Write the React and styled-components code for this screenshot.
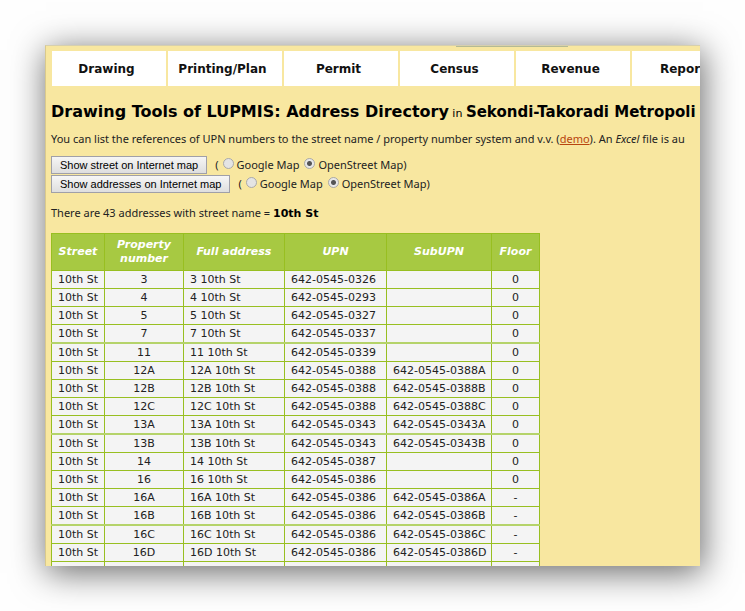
import React, { useState } from "react";
import styled, { createGlobalStyle } from "styled-components";

const GlobalStyle = createGlobalStyle`
  * {
    box-sizing: border-box;
  }

  body {
    margin: 0;
    background: #fefefe;
    color: #222;
    font-family: "DejaVu Sans", Verdana, sans-serif;
    font-size: 11px;
    line-height: 14px;
  }
`;

const Page = styled.div`
  height: 100vh;
  padding: 45px;
`;

const Frame = styled.main`
  display: flex;
  flex-direction: column;
  align-items: flex-start;
  height: 100%;
  padding: 0 5px;
  overflow: hidden;
  white-space: nowrap;
  background: #f8e7a0;
  border-top: 1px solid #d6cfae;
  border-left: 1px solid #d9c98c;
  box-shadow: 2px 6px 32px 1px rgba(0, 0, 0, 0.58);
`;

const Tab = styled.div`
  flex: none;
  width: 112px;
  height: 1px;
  margin-left: 405px;
  background: #b4ba94;
`;

const Nav = styled.nav`
  display: flex;
  flex: none;
  gap: 2px;
  margin-top: 4px;
  padding-left: 1px;
`;

const NavLink = styled.a`
  display: flex;
  flex: none;
  align-items: center;
  justify-content: center;
  width: 114px;
  height: 35px;
  padding-right: 5px;
  background: #fff;
  color: #111;
  font-size: 12px;
  font-weight: bold;
  text-decoration: none;
`;

const Title = styled.h1`
  margin: 16px 0 0;
  font-size: 11px;
  line-height: 20px;
  font-weight: normal;
  color: #000;
`;

const TitleName = styled.b`
  font-size: 16px;
`;

const TitlePlace = styled.b`
  font-size: 15px;
`;

const Text = styled.p`
  margin: ${({ $top }) => $top}px 0 0;
  font-family: "Noto Sans", sans-serif;
  font-size: 11px;
`;

const StreetName = styled.b`
  font-family: "DejaVu Sans", Verdana, sans-serif;
  color: #000;
`;

const DemoLink = styled.a`
  color: #b8450f;
`;

const Forms = styled.div`
  display: flex;
  flex-direction: column;
  gap: 1px;
  margin-top: 10px;
`;

const MapForm = styled.form`
  display: flex;
  align-items: center;
  height: 18px;
  font-family: "Noto Sans", sans-serif;
`;

const MapButton = styled.button`
  height: 18px;
  margin-right: 8px;
  padding: 0 8px;
  border: 1px solid #a0a0a8;
  background: linear-gradient(#f6f6f6, #dedede);
  color: #000;
  font-family: "Liberation Sans", Arial, sans-serif;
  font-size: 11px;
  line-height: 16px;
`;

const RadioLabel = styled.label`
  display: flex;
  align-items: center;
  gap: 3px;
  margin-left: ${({ $left }) => $left}px;
`;

const Radio = styled.input`
  appearance: none;
  width: 11px;
  height: 11px;
  margin: 0 0 4px;
  border: 1px solid #a9a9a9;
  border-radius: 50%;
  background: #e4e4e4;

  &:checked {
    background: radial-gradient(circle, #555 0 2px, #e8e8e8 3px);
  }
`;

const Table = styled.table`
  flex: none;
  width: 488px;
  margin-top: 12px;
  table-layout: fixed;
  border-collapse: collapse;
  background: #f4f4f4;
`;

const Col = styled.col`
  width: ${({ $width }) => $width}px;
`;

const HeadCell = styled.th`
  height: 37px;
  padding: 0;
  border: 1px solid #98bf21;
  background: #a7c942;
  color: #fff;
  font-style: italic;
  white-space: normal;
`;

const Row = styled.tr`
  &:nth-child(5n + 4) td {
    border-bottom: 2px solid #b5d36a;
  }
`;

const Cell = styled.td`
  padding: 2px 6px 1px;
  border: 1px solid #98bf21;
  text-align: ${({ $align }) => $align || "left"};
`;

const menu = ["Drawing", "Printing/Plan", "Permit", "Census", "Revenue", "Reports"];

const columns = [
  { name: "Street", width: 53 },
  { name: "Property number", width: 79 },
  { name: "Full address", width: 101 },
  { name: "UPN", width: 102 },
  { name: "SubUPN", width: 105 },
  { name: "Floor", width: 48 },
];

const addresses = [
  ["3", "0326", "", "0"],
  ["4", "0293", "", "0"],
  ["5", "0327", "", "0"],
  ["7", "0337", "", "0"],
  ["11", "0339", "", "0"],
  ["12A", "0388", "A", "0"],
  ["12B", "0388", "B", "0"],
  ["12C", "0388", "C", "0"],
  ["13A", "0343", "A", "0"],
  ["13B", "0343", "B", "0"],
  ["14", "0387", "", "0"],
  ["16", "0386", "", "0"],
  ["16A", "0386", "A", "-"],
  ["16B", "0386", "B", "-"],
  ["16C", "0386", "C", "-"],
  ["16D", "0386", "D", "-"],
  ["16E", "0386", "E", "-"],
];

const MapChooser = ({ label, name }) => {
  const [map, setMap] = useState("osm");

  return (
    <MapForm onSubmit={(e) => e.preventDefault()}>
      <MapButton type="submit">{label}</MapButton>
      (
      <RadioLabel $left={4}>
        <Radio
          type="radio"
          name={name}
          checked={map === "google"}
          onChange={() => setMap("google")}
        />
        Google Map
      </RadioLabel>
      <RadioLabel $left={5}>
        <Radio
          type="radio"
          name={name}
          checked={map === "osm"}
          onChange={() => setMap("osm")}
        />
        OpenStreet Map)
      </RadioLabel>
    </MapForm>
  );
};

const App = () => {
  return (
    <Page>
      <GlobalStyle />
      <Frame>
        <Tab />
        <Nav>
          {menu.map((item) => (
            <NavLink key={item} href="#">
              {item}
            </NavLink>
          ))}
        </Nav>

        <Title>
          <TitleName>Drawing Tools of LUPMIS: Address Directory</TitleName> in{" "}
          <TitlePlace>Sekondi-Takoradi Metropoli</TitlePlace>
        </Title>

        <Text $top={8}>
          You can list the references of UPN numbers to the street name /
          property number system and v.v. (<DemoLink href="#">demo</DemoLink>).
          An <em>Excel</em> file is au
        </Text>

        <Forms>
          <MapChooser label="Show street on Internet map" name="street" />
          <MapChooser label="Show addresses on Internet map" name="addresses" />
        </Forms>

        <Text $top={13}>
          There are 43 addresses with street name ={" "}
          <StreetName>10th St</StreetName>
        </Text>

        <Table>
          <colgroup>
            {columns.map((col) => (
              <Col key={col.name} $width={col.width} />
            ))}
          </colgroup>
          <thead>
            <tr>
              {columns.map((col) => (
                <HeadCell key={col.name}>{col.name}</HeadCell>
              ))}
            </tr>
          </thead>
          <tbody>
            {addresses.map(([number, upn, sub, floor]) => (
              <Row key={number}>
                <Cell>10th St</Cell>
                <Cell $align="center">{number}</Cell>
                <Cell>{number} 10th St</Cell>
                <Cell>642-0545-{upn}</Cell>
                <Cell>{sub && `642-0545-${upn}${sub}`}</Cell>
                <Cell $align="center">{floor}</Cell>
              </Row>
            ))}
          </tbody>
        </Table>
      </Frame>
    </Page>
  );
};

export default App;
